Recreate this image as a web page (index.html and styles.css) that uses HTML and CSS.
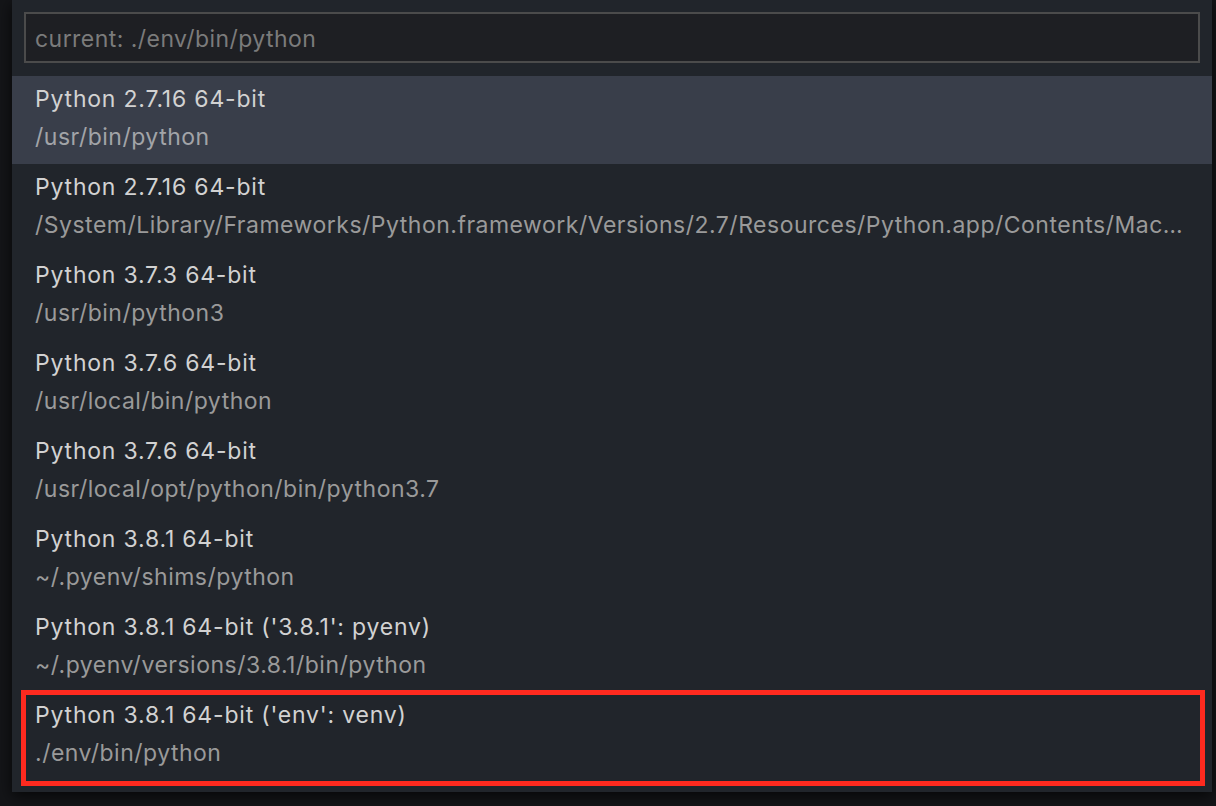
FILE: index.html
```html
<!DOCTYPE html>
<html>
<head>
<meta charset="utf-8">
<link rel="stylesheet" href="styles.css">
</head>
<body>
<div class="panel">
  <div class="input">current: ./env/bin/python</div>
  <div class="list">
    <div class="row active"><div class="title">Python 2.7.16 64-bit</div><div class="path">/usr/bin/python</div></div>
    <div class="row"><div class="title">Python 2.7.16 64-bit</div><div class="path">/System/Library/Frameworks/Python.framework/Versions/2.7/Resources/Python.app/Contents/MacOS/Python</div></div>
    <div class="row"><div class="title">Python 3.7.3 64-bit</div><div class="path">/usr/bin/python3</div></div>
    <div class="row"><div class="title">Python 3.7.6 64-bit</div><div class="path">/usr/local/bin/python</div></div>
    <div class="row"><div class="title">Python 3.7.6 64-bit</div><div class="path">/usr/local/opt/python/bin/python3.7</div></div>
    <div class="row"><div class="title">Python 3.8.1 64-bit</div><div class="path">~/.pyenv/shims/python</div></div>
    <div class="row"><div class="title">Python 3.8.1 64-bit ('3.8.1': pyenv)</div><div class="path">~/.pyenv/versions/3.8.1/bin/python</div></div>
    <div class="row marked"><div class="title">Python 3.8.1 64-bit ('env': venv)</div><div class="path">./env/bin/python</div><div class="mark"></div></div>
  </div>
</div>
</body>
</html>
```
FILE: styles.css
```css
html, body {
  margin: 0;
  padding: 0;
  background: #141518;
  height: 806px;
  overflow: hidden;
}
.panel {
  margin-left: 12px;
  width: 1200px;
  height: 792px;
  background: #21252b;
  box-shadow: 0 4px 14px rgba(0,0,0,0.7);
  font-family: Inter, "Noto Sans", sans-serif;
  font-size: 23px;
  letter-spacing: 0.8px;
  padding-top: 12px;
  box-sizing: border-box;
}
.input {
  margin: 0 12px;
  height: 51px;
  box-sizing: border-box;
  border: 2px solid #4b4b4b;
  background: #1e1f23;
  color: #7b7b7b;
  padding: 3px 0 0 9px;
  line-height: 44px;
  letter-spacing: 0.45px;
}
.list {
  margin-top: 13px;
}
.row {
  position: relative;
  height: 88px;
  box-sizing: border-box;
  padding: 4px 24px 0 23px;
}
.row.active {
  background: #393e4a;
}
.title {
  line-height: 38px;
  color: #d2d2d2;
  white-space: nowrap;
}
.path {
  line-height: 38px;
  color: #9a9a9a;
  white-space: nowrap;
  overflow: hidden;
  text-overflow: ellipsis;
  letter-spacing: 0.5px;
}
.active .path {
  color: #a2a4a8;
}
.mark {
  position: absolute;
  top: -2px;
  left: 9px;
  right: 7px;
  bottom: -6px;
  border: 5px solid #ff2a1f;
}
```
